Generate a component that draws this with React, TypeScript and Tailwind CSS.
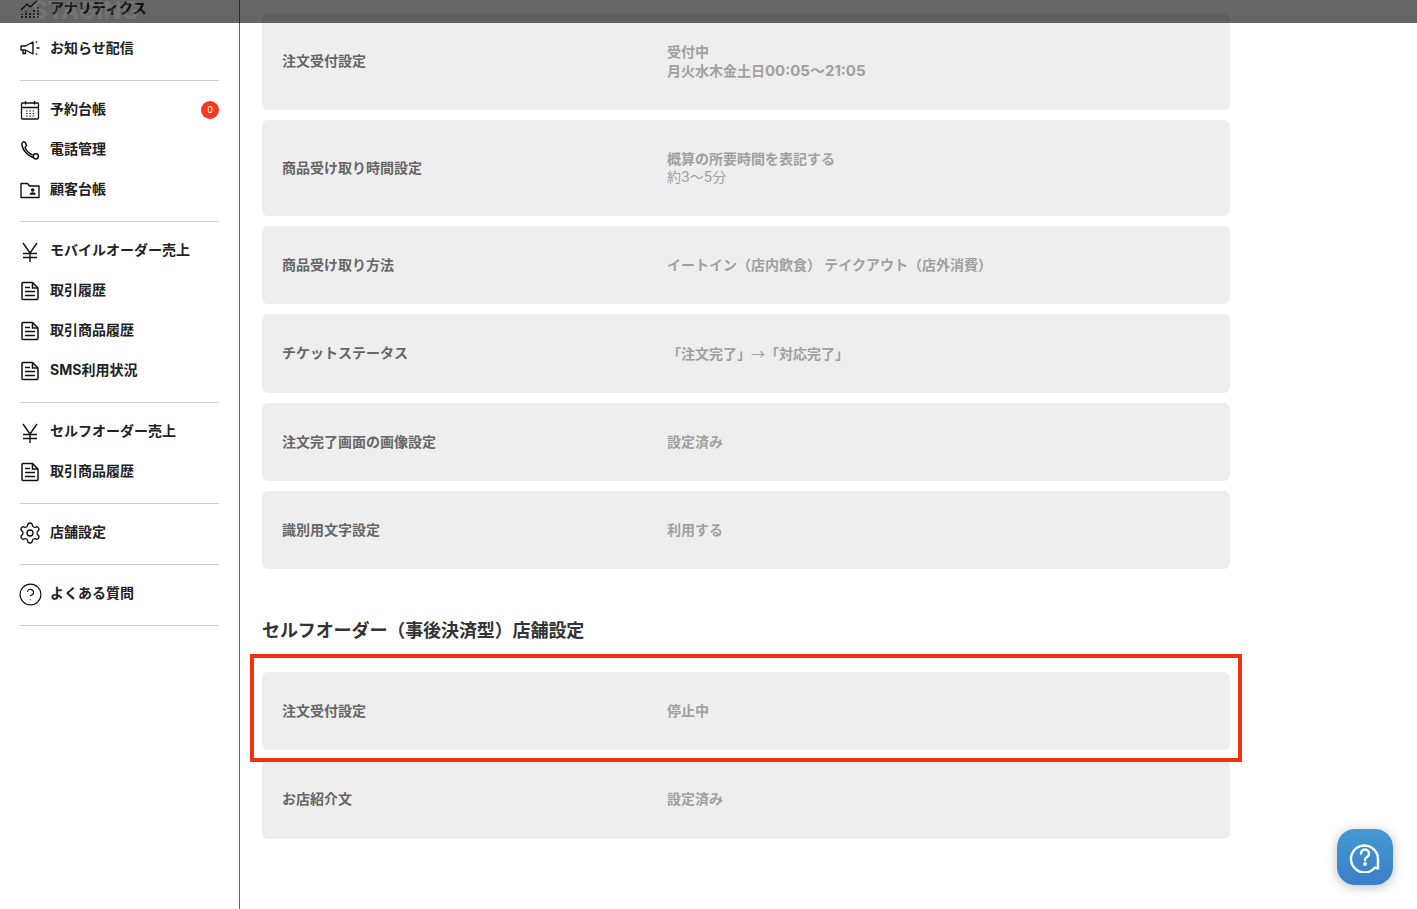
import { Settings, CircleHelp } from 'lucide-react'

const font = { fontFamily: 'Inter, "Noto Sans CJK JP", sans-serif' }

function YenIcon() {
  return (
    <svg viewBox="0 0 20 22" className="mt-1 h-[22px] w-5" fill="none" stroke="#111" strokeWidth="1.400">
      <path d="M3 2 10 12 17 2M10 12v9M3 12.500h14M3 16.500h14" />
    </svg>
  )
}

function FileIcon() {
  return (
    <svg viewBox="0 0 20 20" className="mt-[2px] h-5 w-5" fill="none" stroke="#111" strokeWidth="1.500">
      <path d="M2 2.500a1 1 0 0 1 1-1h9.500L18 7v10.500a1 1 0 0 1-1 1H3a1 1 0 0 1-1-1z" strokeLinejoin="round" />
      <path d="M12.500 1.500V7H18" />
      <path d="M5 6.500h5M5 10.500h10M5 14.500h10" />
    </svg>
  )
}

function CalendarIcon() {
  return (
    <svg viewBox="0 0 20 20" className="mt-[2px] h-5 w-5" fill="none" stroke="#111" strokeWidth="1.300">
      <rect x="1.500" y="3" width="17" height="16" rx="1" />
      <path d="M1.500 7.500h17M5.500 1v3.500M14.500 1v3.500" />
      <path d="M6 11h1.500M9.300 11h1.500M12.600 11h1.500M6 13.500h1.500M9.300 13.500h1.500M12.600 13.500h1.500M6 16h1.500M9.300 16h1.500M12.600 16h1.500" strokeWidth="1" />
    </svg>
  )
}

function PhoneIcon() {
  return (
    <svg viewBox="0 0 20 20" className="mt-[2px] h-5 w-5" fill="none" stroke="#111" strokeWidth="1.500">
      <path d="M2.500 2.500C3.500 1.500 5 1.700 5.500 3L6.500 5.500 5 7.500C6.500 11 9 13.500 12.500 15" />
      <path d="M2.500 2.500C1.800 3.300 1.800 4.500 2 5.500 3 10.500 8 16 13 17.500" />
      <circle cx="15.800" cy="16.300" r="2.600" />
    </svg>
  )
}

function FolderUserIcon() {
  return (
    <svg viewBox="0 0 20 20" className="mt-[2px] h-5 w-5" fill="#111" stroke="none">
      <path d="M1 3.500h6.500l2 2.500H19v11.500H1z" fill="none" stroke="#111" strokeWidth="1.400" strokeLinejoin="round" />
      <circle cx="12.700" cy="10" r="1.800" />
      <path d="M9.500 14.700c.3-1.700 1.600-2.400 3.200-2.400s2.900.7 3.200 2.400z" />
    </svg>
  )
}

function MegaphoneIcon() {
  return (
    <svg viewBox="0 0 20 20" className="mt-[2px] h-5 w-5" fill="none" stroke="#111" strokeWidth="1.400">
      <path d="M1 7h4.500L13 3v12L5.500 11H1z" strokeLinejoin="round" />
      <path d="M3 11v3.500h2.500V11" />
      <path d="M16 3.500 17 2.500M16.500 9h3M16 14.500l1 1" strokeWidth="1.600" />
    </svg>
  )
}

function ChartIcon() {
  return (
    <svg viewBox="0 0 20 20" className="mt-[2px] h-5 w-5" fill="none" stroke="#111" strokeWidth="1.200">
      <path d="M1 11 7 5l3 3 7-6" />
      <path d="M2 19v-4M6 19v-7M10 19v-6M14 19v-8M18 19V8" strokeWidth="1.400" strokeDasharray="2 1" />
    </svg>
  )
}

type NavItem = { icon: React.ReactNode; label: string; badge?: string }

const navGroups: NavItem[][] = [
  [
    { icon: <ChartIcon />, label: 'アナリティクス' },
    { icon: <MegaphoneIcon />, label: 'お知らせ配信' },
  ],
  [
    { icon: <CalendarIcon />, label: '予約台帳', badge: '0' },
    { icon: <PhoneIcon />, label: '電話管理' },
    { icon: <FolderUserIcon />, label: '顧客台帳' },
  ],
  [
    { icon: <YenIcon />, label: 'モバイルオーダー売上' },
    { icon: <FileIcon />, label: '取引履歴' },
    { icon: <FileIcon />, label: '取引商品履歴' },
    { icon: <FileIcon />, label: 'SMS利用状況' },
  ],
  [
    { icon: <YenIcon />, label: 'セルフオーダー売上' },
    { icon: <FileIcon />, label: '取引商品履歴' },
  ],
  [{ icon: <Settings className="mt-[2px] h-6 w-6 shrink-0" strokeWidth={1.300} color="#111" />, label: '店舗設定' }],
  [{ icon: <CircleHelp className="mt-[2px] h-[25px] w-[25px] shrink-0" strokeWidth={1.100} color="#111" />, label: 'よくある質問' }],
]

function Sidebar() {
  return (
    <aside className="-mt-5 w-[240px] shrink-0 border-r border-[#666] px-5">
      {navGroups.map((group, i) => (
        <div key={i} className="border-b border-[#ccc] pt-2 pb-3">
          {group.map((item, j) => (
            <div key={j} className="flex h-10 items-center">
              <div className="flex w-[30px] shrink-0 items-center justify-start">
                <span className="flex w-5 justify-center">{item.icon}</span>
              </div>
              <span className="-mt-[2px] flex-1 text-[14px] font-bold text-[#222]">{item.label}</span>
              {item.badge && (
                <span className="mt-[1px] flex h-[18px] w-[18px] items-center justify-center rounded-full bg-[#f53a1f] text-[9px] text-white">
                  {item.badge}
                </span>
              )}
            </div>
          ))}
        </div>
      ))}
    </aside>
  )
}

function SettingRow({ label, value, height }: { label: string; value: React.ReactNode; height: string }) {
  return (
    <div className={`flex items-start rounded-md bg-[#eee] pl-5 ${height}`}>
      <div className="w-[385px] shrink-0 pt-[29px] text-[14px] leading-5 font-bold text-[#666]">{label}</div>
      <div className="pt-[29px] text-[14px] leading-[20px] font-bold text-[#a0a0a0]">{value}</div>
    </div>
  )
}

export default function App() {
  return (
    <div className="relative flex h-[909px] overflow-hidden bg-white" style={font}>
      <Sidebar />

      <main className="mt-[13px] flex-1 pl-[22px]">
        <div className="w-[968px] space-y-[10px]">
          <div className="flex h-[97px] items-start rounded-md bg-[#eee] pl-5">
            <div className="w-[385px] shrink-0 pt-[38px] text-[14px] leading-5 font-bold text-[#666]">注文受付設定</div>
            <div className="pt-[29px] text-[14px] leading-5 font-bold text-[#a0a0a0]">
              <div className="h-[19px]">受付中</div>
              <div>
                月火水木金土日<span className="text-[15px]">00:05〜21:05</span>
              </div>
            </div>
          </div>
          <div className="flex h-[96px] items-start rounded-md bg-[#eee] pl-5">
            <div className="w-[385px] shrink-0 pt-[38px] text-[14px] leading-5 font-bold text-[#666]">商品受け取り時間設定</div>
            <div className="pt-[30px] text-[14px] leading-[18px] font-bold text-[#a0a0a0]">
              <div>概算の所要時間を表記する</div>
              <div className="font-normal">約3〜5分</div>
            </div>
          </div>
          <SettingRow label="商品受け取り方法" height="h-[78px]" value="イートイン（店内飲食） テイクアウト（店外消費）" />
          <SettingRow
            label="チケットステータス"
            height="h-[79px]"
            value={
              <>
                「注文完了」<span className="font-['Noto_Sans_CJK_JP'] font-normal">→</span>「対応完了」
              </>
            }
          />
          <SettingRow label="注文完了画面の画像設定" height="h-[78px]" value="設定済み" />
          <SettingRow label="識別用文字設定" height="h-[78px]" value="利用する" />
        </div>

        <h2 className="mt-[48px] mb-[27px] text-[18px] leading-7 font-bold tracking-[-0.1px] text-[#333]">セルフオーダー（事後決済型）店舗設定</h2>

        <div className="w-[968px] space-y-[10px]">
          <SettingRow label="注文受付設定" height="h-[78px]" value="停止中" />
          <SettingRow label="お店紹介文" height="h-[79px]" value="設定済み" />
        </div>
      </main>

      {/* red highlight box from the annotation */}
      <div className="absolute top-[654px] left-[250px] h-[108px] w-[992px] border-4 border-[#f5320f]" />

      {/* dim layer at the top, with the faint env watermark */}
      <div className="absolute top-0 left-0 h-[23px] w-full overflow-hidden bg-black/60">
        <span className="absolute -top-[1px] left-[32px] text-[24px] leading-6 font-bold text-white/10">STAGING</span>
      </div>

      <div className="absolute top-[829px] left-[1337px] flex h-14 w-14 items-center justify-center rounded-[18px] bg-gradient-to-b from-[#4499d0] to-[#3b7fc8] shadow-[0_2px_12px_rgba(0,0,0,0.25)]">
        <svg viewBox="0 0 32 32" className="h-8 w-8" fill="none" stroke="#fff" strokeWidth="2.400">
          <path d="M29 27.500 26 26.500A13.500 13.500 0 1 1 29 17.500z" strokeLinejoin="round" />
          <path d="M12 12.500a4 4 0 1 1 6 3.500c-1.500.8-2 1.500-2 3" strokeLinecap="round" />
          <circle cx="16" cy="23" r="0.800" fill="#fff" />
        </svg>
      </div>
    </div>
  )
}
